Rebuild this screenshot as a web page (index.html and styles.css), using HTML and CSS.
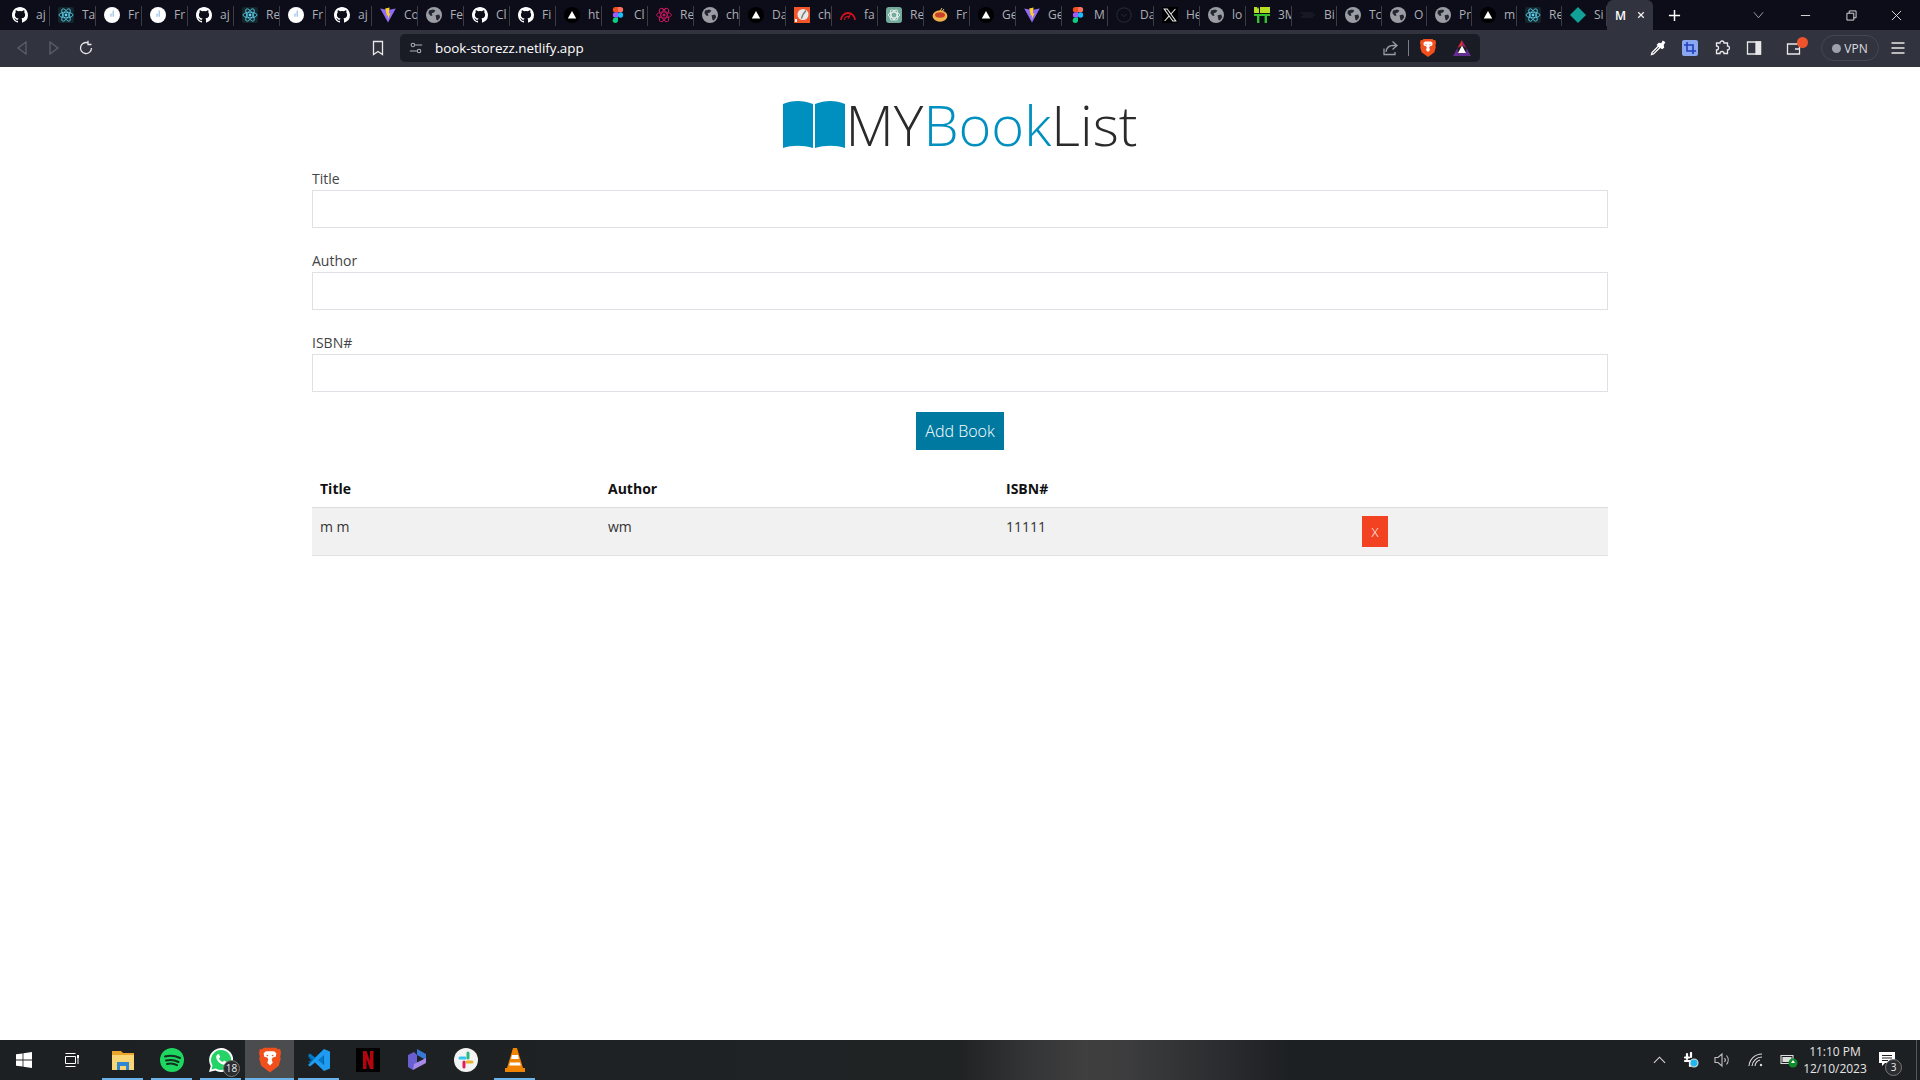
FILE: index.html
```html
<!DOCTYPE html>
<html lang="en">
<head>
<meta charset="utf-8">
<title>MyBookList</title>
<link rel="stylesheet" href="styles.css">
</head>
<body>
<svg class="defs" xmlns="http://www.w3.org/2000/svg">
  <symbol id="gh" viewBox="0 0 16 16"><path fill="#fff" d="M8 0C3.58 0 0 3.58 0 8c0 3.54 2.29 6.53 5.47 7.59.4.07.55-.17.55-.38v-1.34c-2.23.48-2.69-1.07-2.69-1.07-.36-.93-.89-1.17-.89-1.17-.73-.5.05-.49.05-.49.8.06 1.23.83 1.23.83.71 1.22 1.87.87 2.33.66.07-.52.28-.87.51-1.07-1.78-.2-3.64-.89-3.64-3.95 0-.87.31-1.59.82-2.15-.08-.2-.36-1.02.08-2.12 0 0 .67-.21 2.2.82a7.6 7.6 0 0 1 4 0c1.53-1.04 2.2-.82 2.2-.82.44 1.1.16 1.92.08 2.12.51.56.82 1.27.82 2.15 0 3.07-1.87 3.75-3.65 3.95.29.25.54.73.54 1.48v2.2c0 .21.15.46.55.38A8 8 0 0 0 16 8c0-4.42-3.58-8-8-8z"/></symbol>
  <symbol id="react" viewBox="0 0 16 16"><rect width="16" height="16" rx="2" fill="#12262b"/><g fill="none" stroke="#5ed3f3" stroke-width=".8"><ellipse cx="8" cy="8" rx="7" ry="2.8"/><ellipse cx="8" cy="8" rx="7" ry="2.8" transform="rotate(60 8 8)"/><ellipse cx="8" cy="8" rx="7" ry="2.8" transform="rotate(120 8 8)"/></g><circle cx="8" cy="8" r="1.4" fill="#5ed3f3"/></symbol>
  <symbol id="reactp" viewBox="0 0 16 16"><g fill="none" stroke="#c2185b" stroke-width=".9"><ellipse cx="8" cy="8" rx="7.4" ry="3"/><ellipse cx="8" cy="8" rx="7.4" ry="3" transform="rotate(60 8 8)"/><ellipse cx="8" cy="8" rx="7.4" ry="3" transform="rotate(120 8 8)"/></g><circle cx="8" cy="8" r="1.5" fill="#c2185b"/></symbol>
  <symbol id="circ" viewBox="0 0 16 16"><circle cx="8" cy="8" r="8" fill="#fff"/><path d="M9.2 3.5v6.2M7 6.5v3.2" stroke="#8fb8e8" stroke-width="1.1" fill="none"/></symbol>
  <symbol id="globe" viewBox="0 0 16 16"><circle cx="8" cy="8" r="8" fill="#9a9da3"/><path fill="#24262f" d="M3 3.5 7 2.4l2.4 1.2-1.4 2-2.3.6.8 2.4-1.7.4L2.4 6.2zM9.6 8.2l3.6-.6 1 2.6-2.4 3.2-1.4-.6z"/></symbol>
  <symbol id="tri" viewBox="0 0 16 16"><circle cx="8" cy="8" r="8" fill="#000"/><path fill="#fff" d="M8 4l4.2 7.4H3.8z"/></symbol>
  <symbol id="vite" viewBox="0 0 16 16"><path fill="#8f6bf8" d="M.2 1.6 8 3 15.8 1.6 8 15.6z"/><path fill="#ffd028" d="M9.6.4 5.2 1.6 6.8 8l-1 .6 2.2 0-.4 4 3-6.4-1.8.2z"/></symbol>
  <symbol id="figma" viewBox="0 0 10 16"><path fill="#f24e1e" d="M2.5 0H5v5.3H2.5a2.65 2.65 0 0 1 0-5.3z"/><path fill="#ff7262" d="M5 0h2.5a2.65 2.65 0 0 1 0 5.3H5z"/><path fill="#a259ff" d="M2.5 5.3H5v5.3H2.5a2.65 2.65 0 0 1 0-5.3z"/><circle cx="7.5" cy="8" r="2.65" fill="#1abcfe"/><path fill="#0acf83" d="M2.5 10.6H5v2.7A2.65 2.65 0 1 1 2.5 10.6z"/></symbol>
  <symbol id="orange" viewBox="0 0 16 16"><rect width="16" height="16" fill="#f0562a"/><circle cx="9" cy="7.5" r="5.5" fill="#e8e8e8"/><path d="M9 7.5 12 3.5M9 7.5l-1.6 4" stroke="#7a7a7a" stroke-width="1.4"/><rect x="1" y="12" width="2" height="3" fill="#fff"/></symbol>
  <symbol id="gauge" viewBox="0 0 16 16"><path d="M1 13A7 7 0 0 1 15 13" fill="none" stroke="#d3101c" stroke-width="1.8"/><path d="M4.4 13A3.6 3.6 0 0 1 10 10" fill="none" stroke="#d3101c" stroke-width="1.2"/><path d="M8 12 11 6" stroke="#d3101c" stroke-width="1"/></symbol>
  <symbol id="gpt" viewBox="0 0 16 16"><rect width="16" height="16" rx="3" fill="#74aa9c"/><g fill="none" stroke="#e8f3f0" stroke-width=".9"><ellipse cx="8" cy="8" rx="5.6" ry="2.8"/><ellipse cx="8" cy="8" rx="5.6" ry="2.8" transform="rotate(60 8 8)"/><ellipse cx="8" cy="8" rx="5.6" ry="2.8" transform="rotate(120 8 8)"/></g></symbol>
  <symbol id="bowl" viewBox="0 0 16 16"><path d="M10 1 7 6M12 2 9 6" stroke="#e9c46a" stroke-width="1"/><ellipse cx="8" cy="9" rx="7.4" ry="5.8" fill="#efb24a"/><ellipse cx="8" cy="8" rx="5" ry="2.8" fill="#c7412a"/></symbol>
  <symbol id="dark" viewBox="0 0 16 16"><circle cx="8" cy="8" r="7.2" fill="#0b0c17" stroke="#25262e" stroke-width="1.2"/><path d="M5 7l3 2.5L11 7" fill="none" stroke="#25262e" stroke-width="1"/></symbol>
  <symbol id="xlogo" viewBox="0 0 16 16"><rect width="16" height="16" fill="#000"/><path fill="none" stroke="#e8e8e8" stroke-width="1.1" d="M2.2 2h3l8.6 12h-3zM13.4 2 9 7M7 9.2 2.6 14"/></symbol>
  <symbol id="threem" viewBox="0 0 16 16"><rect y="7" width="16" height="2" fill="#35c22d"/><rect x="3" y="9" width="2.4" height="7" fill="#35c22d"/><rect x="10.6" y="9" width="2.4" height="7" fill="#35c22d"/><path fill="#b7de26" d="M0 6V0h3l1 2 1-2h0v6H0zM6 6V0h10v6z"/></symbol>
  <symbol id="bars" viewBox="0 0 16 16"><path d="M1 6h12M3 8h12M1 10h12" stroke="#22242d" stroke-width="1.2"/></symbol>
  <symbol id="dia" viewBox="0 0 16 16"><path fill="#12a196" d="M8 0 16 8 8 16 0 8z"/></symbol>
  <symbol id="brave" viewBox="0 0 16 18"><path fill="#f1501d" d="M3.4 0h9.2l1 1.2L15.4 1l.6 3-.6 2.4.4 1.6-1.4 5.2L8 18l-6.4-4.8L.2 8l.4-1.6L0 4l.6-3 1.8.2z"/><path fill="#fff" d="M5 2.600h6l1.600 1.400-.4 2.600-2.200.6-.8 1.400.8 2.400L8 13l-2-2 .8-2.400L6 7.200l-2.200-.6L3.400 4z"/><path fill="#f1501d" d="M5 5.200l1.800.2-.4 1zM11 5.200l-1.800.2.4 1z"/></symbol>
  <symbol id="bat" viewBox="0 0 18 16"><path fill="#9e1f63" d="M9 0l4.5 8L9 5.500z"/><path fill="#e0322e" d="M9 0 4.500 8 9 5.500z"/><path fill="#fff" d="M9 5.500 13 13H5z"/><path fill="#662d91" d="M0 16 4.500 8 5 13h8l.5-5L18 16z"/></symbol>
</svg>

<div class="app">
  <header class="chrome">
    <div class="tabstrip">
      <div class="tab"><svg class="fav"><use href="#gh"/></svg><span>aj</span></div>
      <div class="tab"><svg class="fav"><use href="#react"/></svg><span>Ta</span></div>
      <div class="tab"><svg class="fav"><use href="#circ"/></svg><span>Fr</span></div>
      <div class="tab"><svg class="fav"><use href="#circ"/></svg><span>Fr</span></div>
      <div class="tab"><svg class="fav"><use href="#gh"/></svg><span>aj</span></div>
      <div class="tab"><svg class="fav"><use href="#react"/></svg><span>Re</span></div>
      <div class="tab"><svg class="fav"><use href="#circ"/></svg><span>Fr</span></div>
      <div class="tab"><svg class="fav"><use href="#gh"/></svg><span>aj</span></div>
      <div class="tab"><svg class="fav"><use href="#vite"/></svg><span>Co</span></div>
      <div class="tab"><svg class="fav"><use href="#globe"/></svg><span>Fe</span></div>
      <div class="tab"><svg class="fav"><use href="#gh"/></svg><span>Cl</span></div>
      <div class="tab"><svg class="fav"><use href="#gh"/></svg><span>Fi</span></div>
      <div class="tab"><svg class="fav"><use href="#tri"/></svg><span>ht</span></div>
      <div class="tab"><svg class="fav"><use href="#figma"/></svg><span>Cl</span></div>
      <div class="tab"><svg class="fav"><use href="#reactp"/></svg><span>Re</span></div>
      <div class="tab"><svg class="fav"><use href="#globe"/></svg><span>ch</span></div>
      <div class="tab"><svg class="fav"><use href="#tri"/></svg><span>Da</span></div>
      <div class="tab"><svg class="fav"><use href="#orange"/></svg><span>ch</span></div>
      <div class="tab"><svg class="fav"><use href="#gauge"/></svg><span>fa</span></div>
      <div class="tab"><svg class="fav"><use href="#gpt"/></svg><span>Re</span></div>
      <div class="tab"><svg class="fav"><use href="#bowl"/></svg><span>Fr</span></div>
      <div class="tab"><svg class="fav"><use href="#tri"/></svg><span>Ge</span></div>
      <div class="tab"><svg class="fav"><use href="#vite"/></svg><span>Ge</span></div>
      <div class="tab"><svg class="fav"><use href="#figma"/></svg><span>M</span></div>
      <div class="tab"><svg class="fav"><use href="#dark"/></svg><span>Da</span></div>
      <div class="tab"><svg class="fav"><use href="#xlogo"/></svg><span>He</span></div>
      <div class="tab"><svg class="fav"><use href="#globe"/></svg><span>lo</span></div>
      <div class="tab"><svg class="fav"><use href="#threem"/></svg><span>3M</span></div>
      <div class="tab"><svg class="fav"><use href="#bars"/></svg><span>Bi</span></div>
      <div class="tab"><svg class="fav"><use href="#globe"/></svg><span>Tc</span></div>
      <div class="tab"><svg class="fav"><use href="#globe"/></svg><span>O</span></div>
      <div class="tab"><svg class="fav"><use href="#globe"/></svg><span>Pr</span></div>
      <div class="tab"><svg class="fav"><use href="#tri"/></svg><span>m</span></div>
      <div class="tab"><svg class="fav"><use href="#react"/></svg><span>Re</span></div>
      <div class="tab"><svg class="fav"><use href="#dia"/></svg><span>Si</span></div>
      <div class="tab-active"><b>M</b><svg class="tab-x" viewBox="0 0 10 10"><path d="M1.5 1.5l7 7M8.500 1.500l-7 7"/></svg></div>
      <svg class="newtab" viewBox="0 0 14 14"><path d="M7 1v12M1 7h12"/></svg>
      <svg class="chev" viewBox="0 0 12 8"><path d="M1 1l5 6 5-6"/></svg>
      <svg class="win win-min" viewBox="0 0 12 12"><path d="M1 6h10"/></svg>
      <svg class="win" viewBox="0 0 12 12"><path d="M1 3.500h7.500V11H1zM3.500 3.500V1H11v7.500H8.500"/></svg>
      <svg class="win win-close" viewBox="0 0 12 12"><path d="M1 1l10 10M11 1L1 11"/></svg>
    </div>
    <div class="toolbar">
      <div class="nav">
        <span class="tb"><svg class="ic dim" viewBox="0 0 16 16"><path d="M12 2 4 8l8 6z"/></svg></span>
        <span class="tb"><svg class="ic dim" viewBox="0 0 16 16"><path d="M4 2l8 6-8 6z"/></svg></span>
        <span class="tb"><svg class="ic" viewBox="0 0 16 16"><path d="M13.500 8A5.500 5.500 0 1 1 10 2.900M10 .8V4.500h3.500"/></svg></span>
        <span class="tb tb-book"><svg class="ic" viewBox="0 0 16 16"><path d="M3.500 1.500h9v13L8 11.500l-4.500 3z"/></svg></span>
      </div>
      <div class="address">
        <svg class="ic tune" viewBox="0 0 16 16"><circle cx="4.500" cy="4.500" r="2"/><path d="M7 4.500h8M1 11.500h8"/><circle cx="11.500" cy="11.500" r="2"/></svg>
        <span class="url">book-storezz.netlify.app</span>
        <svg class="ic share" viewBox="0 0 16 16"><path d="M10.500 1.500 15 5.500l-4.500 4M15 5.500H11C7 5.500 4.500 8 4 12M2 8.500V14.500H13V12"/></svg>
        <i class="divider"></i>
        <svg class="brave-ic"><use href="#brave"/></svg>
        <svg class="bat-ic"><use href="#bat"/></svg>
      </div>
      <div class="tools">
        <span class="tb"><svg class="ic wand" viewBox="0 0 16 16"><path d="M1.500 14.500 2 12.500 8.500 6 10 7.500 3.500 14z"/><path class="solid" d="M9 3.500 11.500 4 13 1.500l1.500 1L13 5l.5 2.500-1.500 1L7.500 5z"/></svg></span>
        <span class="tb"><svg class="crop" viewBox="0 0 16 16"><rect width="16" height="16" rx="2" fill="#8ba7f0"/><path d="M5 2v9h9M2 5h9v9" fill="none" stroke="#1f3fbf" stroke-width="1.600"/></svg></span>
        <span class="tb"><svg class="ic" viewBox="0 0 16 16"><path d="M6 3a2 2 0 0 1 4 0h3.500v3a2 2 0 0 1 0 4v3.500H10a2 2 0 0 0-4 0H2.500V10a2 2 0 0 0 0-4V3z"/></svg></span>
        <span class="tb"><svg class="ic" viewBox="0 0 16 16"><path d="M1.500 2h13v12h-13z"/><path class="solid" d="M10 2h4.500v12H10z"/></svg></span>
        <span class="tb tb-wallet"><svg class="ic" viewBox="0 0 16 16"><path d="M1.500 4h12v10h-12zM9 9h5"/></svg><i class="dot"></i></span>
        <span class="vpn"><i class="vpn-dot"></i>VPN</span>
        <span class="tb tb-menu"><svg class="ic" viewBox="0 0 16 16"><path d="M1.500 3h13M1.500 8h13M1.500 13h13"/></svg></span>
      </div>
    </div>
  </header>

  <main class="page">
    <h1 class="logo">
      <svg class="logo-book" viewBox="0 0 62 47"><path fill="#0090bf" d="M0 3C9-1 20-1 30 3v44c-10-3-21-3-30 0zM32 3c10-4 21-4 30 0v44c-9-3-20-3-30 0z"/></svg>
      <span>MY</span><span class="blue">Book</span><span>List</span>
    </h1>
    <form class="form">
      <div class="group"><label>Title</label><input type="text"></div>
      <div class="group"><label>Author</label><input type="text"></div>
      <div class="group"><label>ISBN#</label><input type="text"></div>
      <div class="submit"><button type="button" class="btn-add">Add Book</button></div>
    </form>
    <table class="books">
      <thead>
        <tr><th class="c1">Title</th><th class="c2">Author</th><th class="c3">ISBN#</th><th class="c4"></th></tr>
      </thead>
      <tbody>
        <tr><td>m m</td><td>wm</td><td>11111</td><td><button type="button" class="btn-del">X</button></td></tr>
      </tbody>
    </table>
  </main>

  <footer class="taskbar">
    <span class="task task-sys"><svg class="t24" viewBox="0 0 16 16"><path fill="#fff" d="M0 2.300 6.600 1.400v6.200H0zM7.400 1.300 16 0v7.600H7.400zM0 8.400h6.600v6.200L0 13.700zM7.400 8.400H16V16l-8.600-1.300z"/></svg></span>
    <span class="task task-sys"><svg class="t24 ts" viewBox="0 0 16 16"><path fill="none" stroke="#fff" d="M1.500 4.500h10v7h-10zM1.500 1.500h10M1.500 14.500h10M14 4v8"/><path stroke="#fff" stroke-width="2" d="M14 3v3"/></svg></span>
    <span class="task on"><svg class="t24" viewBox="0 0 24 24"><path fill="#e9a62a" d="M1 3h9l2 2h11v4H1z"/><path fill="#f8d675" d="M1 7h22v15H1z"/><path fill="#2d87d3" d="M6 22v-8h12v8h-3v-4H9v4z"/></svg></span>
    <span class="task on"><svg class="t24" viewBox="0 0 24 24"><circle cx="12" cy="12" r="12" fill="#1ed760"/><path d="M5 8.500c5-1.500 10-1 15 1.500M6 12.500c4-1 8.500-.7 12.500 1.500M7 16c3.500-.8 7-.5 10 1.200" fill="none" stroke="#14301f" stroke-width="2" stroke-linecap="round"/></svg></span>
    <span class="task on task-wa"><svg class="t24" viewBox="0 0 24 24"><path fill="#fff" d="M12 0a12 12 0 0 0-10.300 18L0 24l6.200-1.600A12 12 0 1 0 12 0z"/><path fill="#25d366" d="M12 2a10 10 0 0 0-8.500 15.200L2.500 21.500l4.300-1.100A10 10 0 1 0 12 2z"/><path fill="#fff" d="M8.500 6.500c-1.500 1-1.800 3-.5 5.200 1.600 2.700 4.500 5 7 5 1.500 0 2.800-1 3-2.500l-3-1.700-1.300 1.500c-1.500-.6-3-2-3.800-3.600l1.300-1.300-1.400-3z"/></svg><b class="badge">18</b></span>
    <span class="task on cur"><svg class="t24 tb-brave"><use href="#brave"/></svg></span>
    <span class="task on"><svg class="t24" viewBox="0 0 24 24"><path fill="#0065a9" d="M1 8.500 3 7l5 4-5 4-2-1.500L4 12.500z"/><path fill="#007acc" d="M17 1 8 9.500 3 5.500 1 7l15.500 14.500z"/><path fill="#1f9cf0" d="M17 1l6 2.500v17L17 23 8 14.500 3 18.500 1 17 17 1.200zM17 7l-6 5 6 5z"/></svg></span>
    <span class="task"><svg class="t24" viewBox="0 0 24 24"><rect width="24" height="24" fill="#000"/><path fill="#b1060f" d="M7 3h3.500L14 13V3h3.500v18H14L10.500 11v10H7z"/></svg></span>
    <span class="task"><svg class="t24" viewBox="0 0 24 24"><path fill="#3a78d8" d="M12 1l9 5v6l-9-5z"/><path fill="#6a5fd0" d="M3 7l6-3 3 3v11l-4 4-5-3z"/><path fill="#a68ae8" d="M8 22l13-7V10L9 16z"/></svg></span>
    <span class="task"><svg class="t24" viewBox="0 0 24 24"><circle cx="12" cy="12" r="12" fill="#f3f3f3"/><g stroke-width="3" stroke-linecap="round"><path stroke="#36c5f0" d="M6 10h5"/><path stroke="#2eb67d" d="M14 5v5"/><path stroke="#ecb22e" d="M13 14h5"/><path stroke="#e01e5a" d="M10 14v5"/></g></svg></span>
    <span class="task on"><svg class="t24" viewBox="0 0 24 24"><path fill="#f08300" d="M10 0h4l6 20h2v4H2v-4h2z"/><path fill="#fff" d="M9 7h6l1 4H8zM7 14.500h10l.8 3H6.200z"/></svg></span>
    <span class="glow"></span>
    <div class="tray">
      <svg class="tr tr-chev" viewBox="0 0 14 8"><path d="M1 7l6-6 6 6"/></svg>
      <svg class="tr tr-slack" viewBox="0 0 16 16"><path d="M4 2v5M8 1v4M2 9h6M7 9v5M2 5.500h4" stroke="#fff" stroke-width="2.200" stroke-linecap="round" fill="none"/><circle cx="11" cy="11" r="4" fill="#1fb6f2"/></svg>
      <svg class="tr tr-vol" viewBox="0 0 16 16"><path d="M1 5.500h3L8 2v12l-4-3.500H1zM10.500 6a3 3 0 0 1 0 4M12.500 3.500a7 7 0 0 1 0 9" opacity=".85"/></svg>
      <svg class="tr tr-wifi" viewBox="0 0 16 16"><path d="M1 14A13 13 0 0 1 14 2M4 14a10 10 0 0 1 10-9M7 14a7 7 0 0 1 5-6"/><circle cx="13" cy="13" r="1.200" fill="#ddd" stroke="none"/></svg>
      <svg class="tr tr-bat" viewBox="0 0 18 16"><path d="M1 3.500h12v8H1z"/><path class="solid" d="M3 5.500h8v4H3z"/><circle cx="13" cy="11" r="4.500" fill="#0f8a2c" stroke="none"/><path d="M13 8l2 3h-4z" fill="#fff" stroke="none"/></svg>
      <div class="clock"><span>11:10 PM</span><span>12/10/2023</span></div>
      <span class="notif"><svg class="notif-ic" viewBox="0 0 16 16"><path fill="#fff" d="M0 0h16v11H6l-3 3v-3H0z"/><path stroke="#222" d="M3 3.500h10M3 6h10M3 8.500h6"/></svg><b class="badge badge-n">3</b></span>
      <i class="desk"></i>
    </div>
  </footer>
</div>
</body>
</html>
```
FILE: styles.css
```css
* { box-sizing: border-box; }
html, body { margin: 0; padding: 0; height: 100%; }
body { font-family: "Open Sans", "Liberation Sans", sans-serif; background: #fff; overflow: hidden; }
.defs { display: none; }
.app { display: flex; flex-direction: column; height: 100vh; }

/* browser chrome */
.chrome { height: 67px; flex: none; background: #31343f; }
.tabstrip { height: 30px; background: #0c0d19; display: flex; align-items: center; padding-left: 4px; }
.tab { width: 46px; height: 30px; flex: none; display: flex; align-items: center; padding-left: 8px; position: relative; }
.tab:nth-child(n+29) { width: 45px; }
.tab::after { content: ""; position: absolute; right: 0; top: 6px; bottom: 4px; width: 1px; background: #3a3c46; }
.fav { width: 16px; height: 16px; flex: none; }
.tab span { margin-left: 8px; width: 13px; overflow: hidden; white-space: nowrap; font-size: 12px; color: #aeafb6; line-height: 30px; }
.tab-active { width: 46px; height: 30px; flex: none; background: #31343f; border-radius: 6px 6px 0 0; display: flex; align-items: center; padding-left: 8px; gap: 11px; color: #fff; font-size: 12px; }
.tab-active b { font-weight: 600; width: 11px; }
.tab-x { width: 8px; height: 8px; fill: none; stroke: #eee; stroke-width: 1.6; }
.newtab { width: 13px; height: 13px; margin-left: 15px; fill: none; stroke: #fff; stroke-width: 1.6; }
.chev { width: 11px; height: 8px; margin-left: 72px; fill: none; stroke: #aaa; }
.win { width: 11px; height: 11px; margin-left: 35px; fill: none; stroke: #e4e4e4; }
.win-min { margin-left: 36px; }
.win-close { margin-left: 34px; }
.toolbar { height: 37px; padding-bottom: 1px; display: flex; align-items: center; }
.nav { width: 400px; display: flex; align-items: center; padding-left: 6px; }
.tb { width: 32px; height: 26px; flex: none; display: flex; align-items: center; justify-content: center; position: relative; }
.tb-book { margin-left: auto; margin-right: 6px; }
.ic { width: 16px; height: 16px; fill: none; stroke: #e8e8ea; stroke-width: 1.3; }
.ic.dim { stroke: #5c5f6b; }
.ic .solid { fill: #e8e8ea; }
.address { width: 1080px; height: 28px; background: #1a1c25; border-radius: 5px; display: flex; align-items: center; padding-left: 9px; }
.tune { width: 14px; height: 14px; stroke: #aeb0b6; stroke-width: 1.2; }
.url { margin-left: 12px; color: #fff; font-size: 13.4px; font-weight: 500; letter-spacing: -.05px; }
.share { margin-left: auto; stroke: #9a9ca4; }
.divider { width: 1px; height: 16px; background: #7c7e88; margin-left: 10px; }
.brave-ic { width: 16px; height: 18px; margin-left: 11px; }
.bat-ic { width: 18px; height: 16px; margin-left: 17px; margin-right: 9px; }
.tools { flex: 1; display: flex; align-items: center; justify-content: flex-end; padding-right: 6px; }
.crop { width: 16px; height: 16px; }
.wand { stroke: #fff; }
.wand .solid { fill: #fff; }
.tb-wallet { margin-left: 8px; }
.dot { position: absolute; width: 11px; height: 11px; border-radius: 50%; background: #f0532b; top: 2px; right: 2px; }
.vpn { width: 58px; height: 26px; border: 1px solid #444754; border-radius: 13px; margin-left: 11px; display: flex; align-items: center; justify-content: center; gap: 3px; color: #dcdde0; font-size: 12px; }
.vpn-dot { width: 9px; height: 9px; border-radius: 50%; background: #9fa1aa; }
.tb-menu { margin-left: 3px; }

/* page */
.page { flex: 1; width: 1296px; margin: 0 auto; }
.logo { margin: 0; height: 100px; padding-top: 34px; display: flex; align-items: flex-start; justify-content: center; font-weight: 300; font-size: 56px; line-height: 47px; color: #2a2a2a; }
.logo-book { width: 62px; height: 47px; flex: none; margin-right: 1px; }
.blue { color: #0090bf; }
.form { display: block; }
.group { margin-bottom: 21px; }
.group label { display: block; font-size: 14px; line-height: 21px; color: #444; padding-top: 1px; height: 23px; }
.group input { display: block; width: 100%; height: 38px; border: 1px solid #dfdfe6; background: #fff; outline: none; }
.submit { display: flex; justify-content: center; margin-top: -1px; }
.btn-add { width: 88px; height: 38px; border: 0; background: #0079a1; color: #fff; font-family: inherit; font-size: 16px; font-weight: 300; padding: 0; }
.books { width: 100%; margin-top: 20px; border-collapse: collapse; table-layout: fixed; font-size: 14px; line-height: 21px; color: #333; }
.books th { text-align: left; padding: 8px; font-weight: 700; color: #111; border-bottom: 1px solid #dedede; }
.books td { padding: 8px; vertical-align: top; background: #f1f1f1; border-bottom: 1px solid #e0e0e0; }
.c1 { width: 288px; }
.c2 { width: 398px; }
.c3 { width: 356px; }
.btn-del { display: block; width: 26px; height: 31px; border: 0; padding: 0; background: #f24222; color: #fff; font-family: inherit; font-size: 13px; font-weight: 300; }

/* taskbar */
.taskbar { height: 40px; flex: none; display: flex; position: relative; background: linear-gradient(90deg, #1d2022 0, #202324 960px, #333536 1030px, #403f3f 1085px, #3c3c3e 1130px, #2e3032 1200px, #1d2022 1290px); }
.task { width: 49px; height: 40px; flex: none; display: flex; align-items: center; justify-content: center; position: relative; }
.task-sys { width: 48px; }
.task-sys + .task-sys { margin-right: 2px; }
.t24 { width: 24px; height: 24px; }
.task-sys .t24 { width: 16px; height: 16px; }
.tb-brave { width: 22px; height: 26px; }
.task.on::after { content: ""; position: absolute; left: 4px; right: 4px; bottom: 0; height: 2px; background: #6cb3ea; }
.task.cur { background: #4a4c4e; }
.task.cur::after { left: 0; right: 0; }
.badge { position: absolute; right: 5px; bottom: 3px; width: 17px; height: 17px; border-radius: 50%; background: #2b2d30; border: 1px solid #777; color: #eee; font-size: 10px; font-weight: 400; line-height: 15px; text-align: center; }
.glow { flex: 1; }
.tray { display: flex; align-items: center; width: 270px; flex: none; }
.tr { width: 16px; height: 16px; margin-left: 16px; fill: none; stroke: #ddd; stroke-width: 1.1; }
.tr-chev { width: 13px; height: 8px; margin-left: 3px; }
.tr-slack { margin-left: 17px; }
.tr-vol { margin-left: 15px; }
.tr-wifi { margin-left: 18px; }
.tr-bat { width: 18px; }
.tr .solid { fill: #ddd; }
.clock { width: 72px; margin-left: 1px; display: flex; flex-direction: column; align-items: center; color: #e6e6e6; font-size: 12px; line-height: 17px; }
.notif { position: relative; width: 32px; height: 40px; display: flex; align-items: center; justify-content: center; }
.notif-ic { width: 16px; height: 16px; }
.badge-n { right: 1px; bottom: 4px; }
.desk { width: 1px; height: 40px; background: #555; margin-left: 13px; }
```
